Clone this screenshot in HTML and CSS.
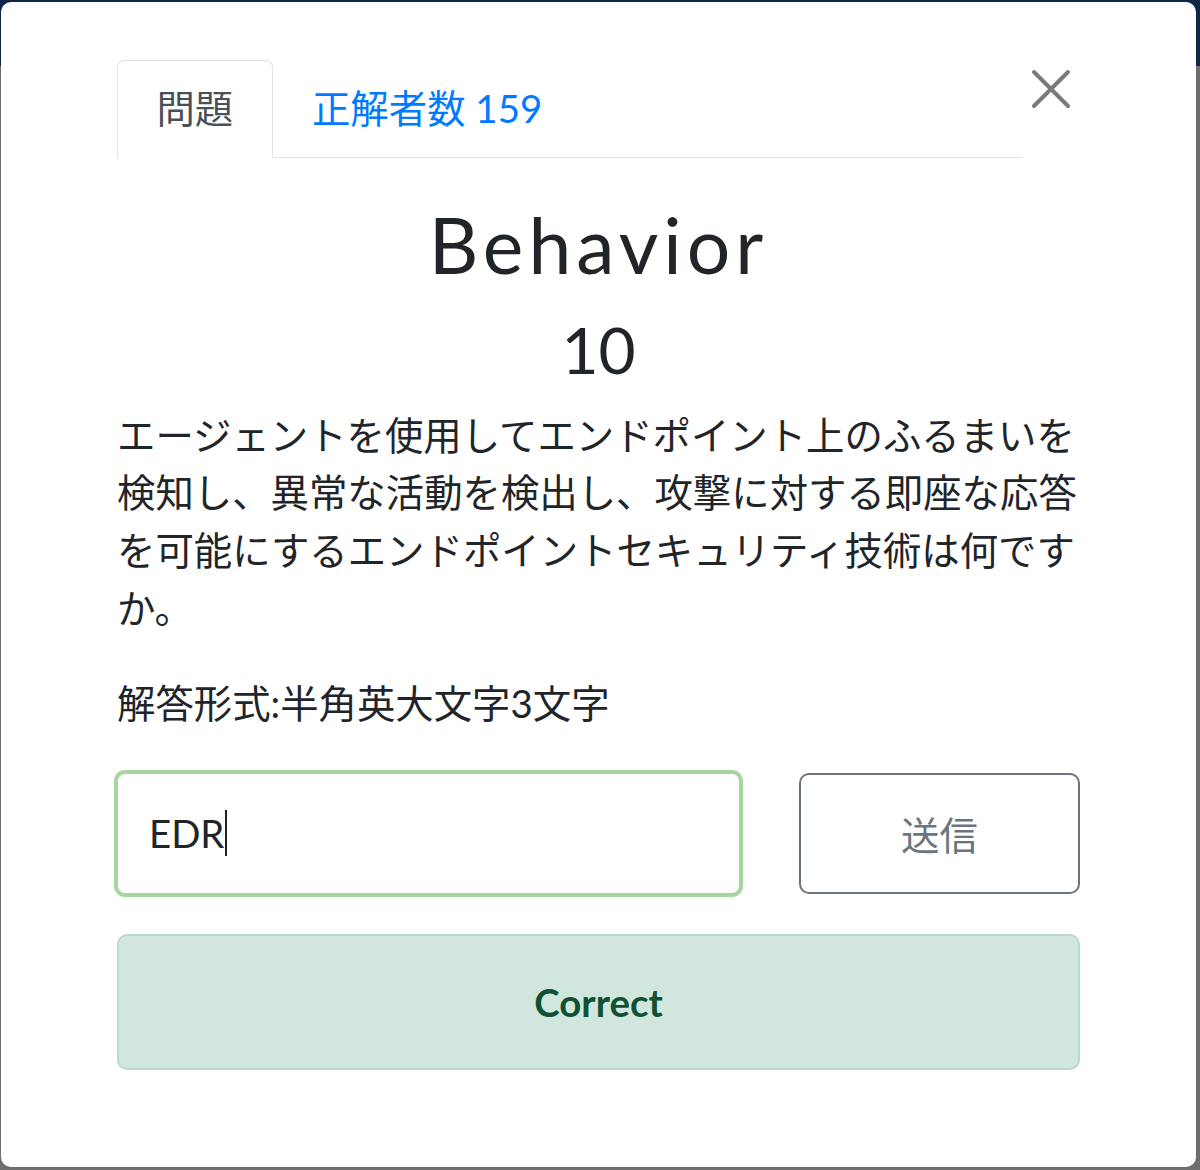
FILE: index.html
```html
<!DOCTYPE html>
<html lang="ja">
  <head>
    <meta charset="UTF-8" />
    <meta name="viewport" content="width=device-width, initial-scale=1.0" />
    <title>Behavior</title>
    <link rel="stylesheet" href="styles.css">
  </head>
  <body>
    <div class="backdrop">
      <div class="modal">
        <div class="modal-head">
          <ul class="tabs">
            <li class="tab active">問題</li>
            <li class="tab link">正解者数 159</li>
          </ul>
          <button class="close" aria-label="Close">
            <svg width="40" height="40" viewBox="0 0 40 40">
              <path d="M3 3 L37 37 M37 3 L3 37" stroke="#7a7a7a" stroke-width="4" stroke-linecap="round" fill="none" />
            </svg>
          </button>
        </div>

        <h2 class="challenge-name">Behavior</h2>
        <h3 class="challenge-value">10</h3>

        <p class="desc">エージェントを使用してエンドポイント上のふるまいを検知し、異常な活動を検出し、攻撃に対する即座な応答を可能にするエンドポイントセキュリティ技術は何ですか。</p>

        <p class="format">解答形式:半角英大文字3文字</p>

        <div class="submit-row">
          <div class="answer" role="textbox">EDR<span class="caret"></span></div>
          <button class="submit">送信</button>
        </div>

        <div class="alert-success">Correct</div>
      </div>
    </div>
  </body>
</html>
```

FILE: styles.css
```css
html,
body {
  margin: 0;
  padding: 0;
  height: 1170px;
  overflow: hidden;
  font-family: "Lato", "Noto Sans CJK JP", sans-serif;
  color: #212529;
}

body {
  background: linear-gradient(#0f2747 0 66px, #6e6e6e 66px);
}

.backdrop {
  padding: 2px 4px 3px 1px;
}

.modal {
  box-sizing: border-box;
  height: 1165px;
  background: #fff;
  border-radius: 10px;
  padding: 58px 116px 0 116px;
}

/* header / tabs */
.modal-head {
  display: flex;
  align-items: flex-start;
}

.tabs {
  flex: 1;
  display: flex;
  list-style: none;
  margin: 0;
  padding: 0;
  border-bottom: 1.2px solid #dee2e6;
}

.tab {
  font-size: 38.4px;
  line-height: 57.6px;
  padding: 19.2px 38.4px;
  border: 1.2px solid transparent;
  border-radius: 7px 7px 0 0;
  margin-bottom: -1.2px;
}

.tab.active {
  color: #495057;
  background: #fff;
  border-color: #dee2e6 #dee2e6 #fff;
}

.tab.link {
  color: #007bff;
}

.close {
  width: 58px;
  height: 58px;
  margin-top: 0;
  padding: 0;
  border: 0;
  background: none;
  display: flex;
  align-items: center;
  justify-content: center;
}

/* title */
.challenge-name {
  margin: 40px 0 0;
  text-align: center;
  font-size: 76.8px;
  font-weight: 400;
  line-height: 1.2;
  letter-spacing: 5px;
}

.challenge-value {
  margin: 22px 0 0;
  text-align: center;
  font-size: 64px;
  font-weight: 400;
  line-height: 1.2;
}

.desc,
.format {
  font-size: 38.4px;
  line-height: 57.6px;
  margin: 18px 0 0;
}

.format {
  margin-top: 38px;
}

/* answer row */
.submit-row {
  display: flex;
  gap: 56px;
  margin-top: 37px;
}

.answer {
  box-sizing: border-box;
  flex: 0 0 629px;
  margin-left: -3px;
  height: 127px;
  border: 4.5px solid #a5d6a0;
  border-radius: 11px;
  padding: 0 31px;
  display: flex;
  align-items: center;
  font-size: 38.4px;
}

.caret {
  display: inline-block;
  width: 2px;
  height: 46px;
  background: #222;
  margin-left: 1px;
}

.submit {
  box-sizing: border-box;
  flex: 1;
  height: 121px;
  margin-top: 3px;
  border: 2px solid #6c757d;
  border-radius: 10px;
  background: #fff;
  color: #6c757d;
  font-family: inherit;
  font-size: 38.4px;
}

.alert-success {
  margin-top: 37px;
  height: 136px;
  box-sizing: border-box;
  display: flex;
  align-items: center;
  justify-content: center;
  background: #d1e7dd;
  border: 2px solid #badbcc;
  border-radius: 10px;
  color: #0f5132;
  font-size: 38.4px;
  font-weight: 700;
}
```
